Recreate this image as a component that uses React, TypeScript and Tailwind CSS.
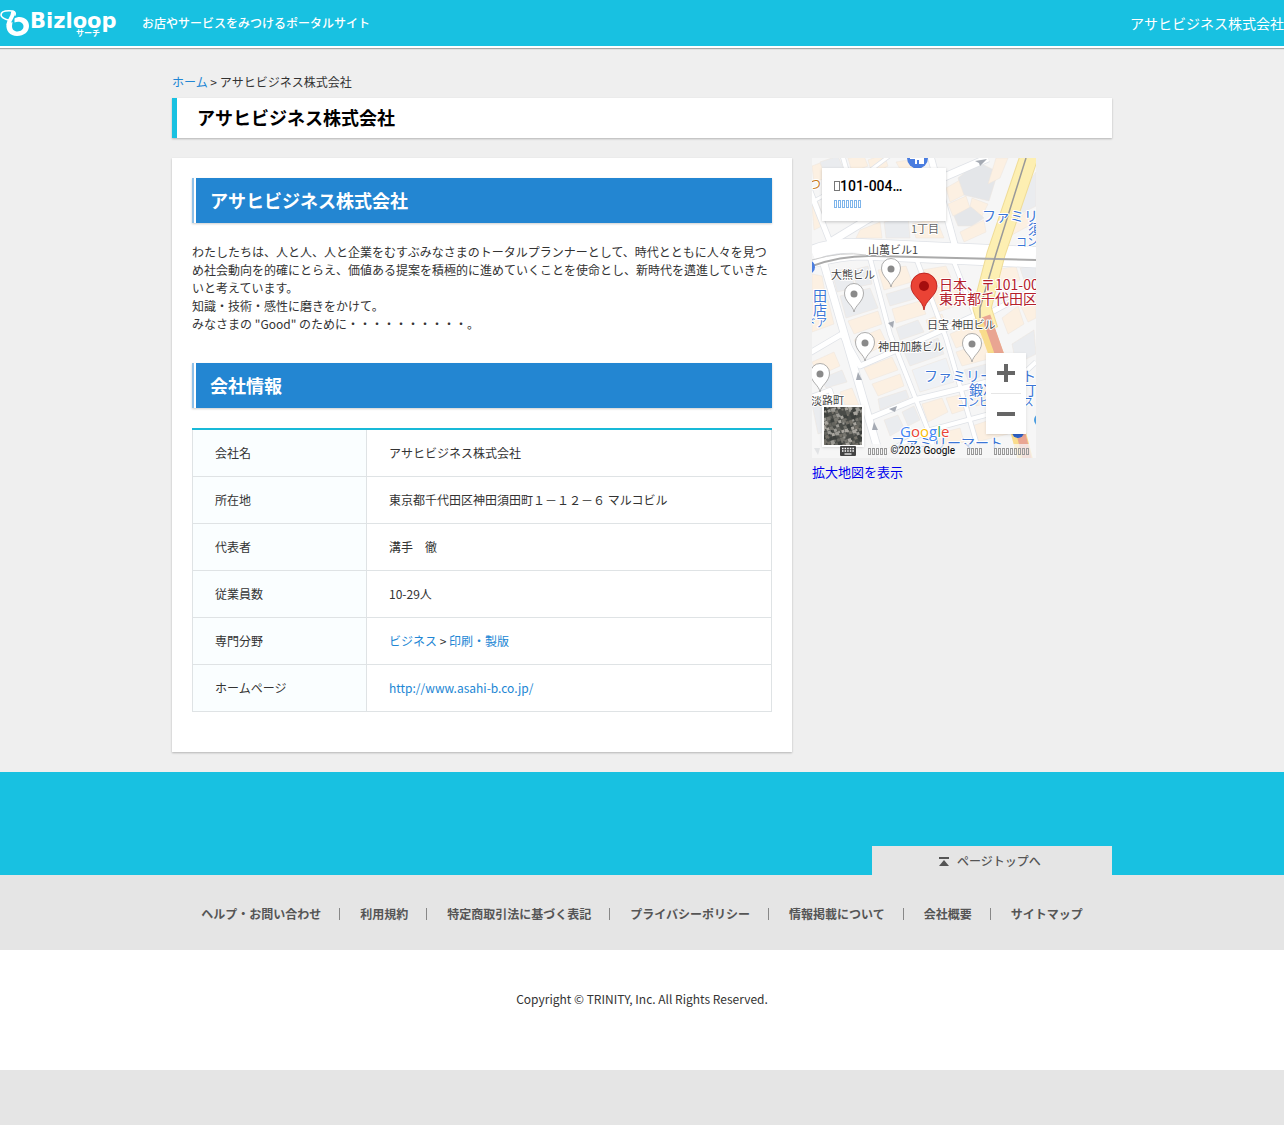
import type { ReactNode } from "react";

const FOOTER_LINKS = [
  "ヘルプ・お問い合わせ",
  "利用規約",
  "特定商取引法に基づく表記",
  "プライバシーポリシー",
  "情報掲載について",
  "会社概要",
  "サイトマップ",
];

const COMPANY: { label: string; value: ReactNode }[] = [
  { label: "会社名", value: "アサヒビジネス株式会社" },
  { label: "所在地", value: "東京都千代田区神田須田町１－１２－６ マルコビル" },
  { label: "代表者", value: "溝手　徹" },
  { label: "従業員数", value: "10-29人" },
  {
    label: "専門分野",
    value: (
      <>
        <TextLink>ビジネス</TextLink> &gt; <TextLink>印刷・製版</TextLink>
      </>
    ),
  },
  { label: "ホームページ", value: <TextLink>http://www.asahi-b.co.jp/</TextLink> },
];

function TextLink({ children }: { children: ReactNode }) {
  return (
    <a href="#" className="text-[#2186d4] hover:underline">
      {children}
    </a>
  );
}

function Logo() {
  return (
    <svg width="120" height="46" viewBox="0 0 120 46" aria-label="Bizloop サーチ">
      <g fill="none" stroke="#fff">
        <path
          d="M10 20.500C4 19 1 17.500 1 15c0-3 4-4.200 8-4.200 4.500 0 7 1.200 6 4.200"
          strokeWidth="1.600"
          strokeLinecap="round"
        />
        <path d="M13 12.500C13 17 9.500 19 8.500 24" strokeWidth="4" strokeLinecap="round" />
      </g>
      <path
        d="M6.500 24c-1 6.500 3.500 12 10.500 12 7 0 12-4.200 12-10 0-5.500-4-9-9.500-9-2 0-3.500.5-5 1.500v4c4.500-2 9 0 9 3.800 0 3.200-2.700 5.200-6 5.200-3.500 0-5.500-2.300-5.500-5.500l.5-4z"
        fill="#fff"
      />
      <text x="30" y="28" fill="#fff" fontFamily="DejaVu Sans" fontWeight="700" fontSize="21">
        Bizloop
      </text>
      <text x="76" y="36" fill="#fff" fontFamily="Noto Sans CJK JP" fontWeight="700" fontSize="8">
        サーチ
      </text>
    </svg>
  );
}

function SectionTitle({ children }: { children: ReactNode }) {
  return (
    <h2 className="border-l-2 border-[#8fc1e9] pl-[2px] text-[18px] font-bold leading-[45px] text-white shadow-[0_1px_2px_rgba(0,0,0,0.2)]">
      <span className="block bg-[#2386d2] pl-[14px]">{children}</span>
    </h2>
  );
}

// Boxes for characters that the map font has no glyph for
function Missing({ count, className }: { count: number; className: string }) {
  return (
    <span className="inline-flex">
      {Array.from({ length: count }, (_, i) => (
        <span key={i} className={`inline-block border ${className}`} />
      ))}
    </span>
  );
}

const ROADS: [string, number][] = [
  ["M20 83L53 63L130 20L176 0", 7],
  ["M-4 28L18 84L6 100", 5],
  ["M30 -4L48 60", 4],
  ["M80 -4L56 14L0 44", 3],
  ["M118 -4L143 88", 6],
  ["M0 95Q20 86 50 88L224 96", 14],
  ["M0 106Q30 98 50 98L224 106", 7],
  ["M12 106L66 292L72 304", 7],
  ["M58 100L78 176L116 272L126 304", 4],
  ["M104 100L134 180L166 290", 4],
  ["M142 104L164 160", 4],
  ["M178 100L176 156L224 130", 5],
  ["M-4 196L30 176L48 208L108 182L164 157", 5],
  ["M-4 240L18 232L40 296", 4],
  ["M58 260L102 242L160 228L190 220", 5],
  ["M70 296L118 272L200 250", 4],
  ["M196 230L224 204", 4],
];

const CREAM = "#fcf0e2";
const GREY = "#eaecef";

const BUILDINGS: [string, string][] = [
  ["0,8 8,5 14,20 2,24", CREAM],
  ["8,4 26,-2 32,12 14,19", GREY],
  ["36,0 52,-2 56,8 40,14", CREAM],
  ["56,2 72,-4 76,8 60,16", CREAM],
  ["84,4 108,0 112,8 92,18", CREAM],
  ["0,48 6,44 14,66 2,72", CREAM],
  ["134,30 148,22 154,36 138,44", CREAM],
  ["136,46 154,38 158,50 141,58", CREAM],
  ["146,20 166,4 186,14 177,43 152,37", "#e4e6e9"],
  ["142,58 160,48 172,60 160,68 146,68", "#e4e6e9"],
  ["148,74 172,62 174,74 152,84", CREAM],
  ["160,40 176,46 170,58 158,48", CREAM],
  ["48,72 68,64 70,80 44,80", CREAM],
  ["72,64 96,58 98,80 74,80", GREY],
  ["100,66 124,60 132,80 104,80", CREAM],
  ["20,114 38,110 43,130 25,134", GREY],
  ["40,112 56,108 60,126 45,129", GREY],
  ["0,116 10,118 14,140 0,142", CREAM],
  ["0,144 16,142 22,166 0,174", CREAM],
  ["28,138 58,130 66,150 34,160", GREY],
  ["36,163 66,153 70,166 42,176", CREAM],
  ["66,112 94,108 100,124 72,132", CREAM],
  ["74,136 102,128 106,140 78,148", GREY],
  ["80,151 108,143 114,156 84,165", CREAM],
  ["110,112 134,108 140,122 116,128", CREAM],
  ["118,132 142,125 150,146 126,154", CREAM],
  ["184,112 204,108 208,122 186,132", CREAM],
  ["208,110 224,108 224,122 212,122", GREY],
  ["42,182 68,171 75,186 50,198", CREAM],
  ["84,170 106,162 112,174 88,182", GREY],
  ["114,162 130,156 134,166 118,174", CREAM],
  ["138,176 166,164 172,180 144,190", CREAM],
  ["144,194 174,184 180,200 150,208", CREAM],
  ["152,212 182,204 186,214 156,222", GREY],
  ["52,210 80,199 86,212 58,222", CREAM],
  ["60,226 88,216 92,228 66,238", CREAM],
  ["66,241 94,232 97,240 68,252", GREY],
  ["92,194 126,180 132,196 98,208", GREY],
  ["100,212 134,200 142,224 108,234", "#eef1f5"],
  ["72,262 86,257 92,270 78,278", GREY],
  ["90,254 102,248 108,262 96,268", GREY],
  ["110,246 130,240 136,254 116,264", CREAM],
  ["134,240 152,236 158,250 140,256", CREAM],
  ["160,232 186,226 190,242 164,248", CREAM],
  ["124,276 148,270 152,284 128,290", CREAM],
  ["160,268 190,258 196,276 164,284", CREAM],
  ["0,204 22,194 28,208 6,218", CREAM],
  ["8,221 30,212 35,224 14,230", GREY],
  ["0,246 16,240 28,268 6,276", GREY],
  ["28,234 40,230 48,250 36,254", CREAM],
  ["176,26 188,20 196,0 184,0", CREAM],
  ["200,66 214,54 220,66 198,78", CREAM],
  ["212,30 224,14 224,48 208,56", GREY],
  ["190,160 206,148 212,166 196,176", CREAM],
  ["208,146 224,138 224,160 216,164", CREAM],
  ["200,186 222,172 224,196 204,206", GREY],
];

const PINS = [
  [79, 111],
  [42, 136],
  [53, 185],
  [160, 186],
  [8, 216],
];

const LABELS: [string, number, number, number, string][] = [
  ["つ", -3, 31, 12, "#c77718"],
  ["1丁目", 99, 75, 11, "#666"],
  ["山萬ビル1", 56, 96, 11, "#444"],
  ["大熊ビル", 19, 121, 11, "#444"],
  ["日宝 神田ビル", 115, 171, 11, "#444"],
  ["神田加藤ビル", 66, 193, 11, "#444"],
  ["淡路町", -1, 247, 11, "#444"],
  ["ファミリ", 170, 63, 14, "#3b76d6"],
  ["須", 216, 76, 14, "#3b76d6"],
  ["コン", 204, 88, 11, "#3b76d6"],
  ["田", 1, 143, 14, "#3b76d6"],
  ["店", 1, 157, 14, "#3b76d6"],
  ["ドア", -7, 169, 11, "#3b76d6"],
  ["ファミリーマート", 112, 223, 14, "#3b76d6"],
  ["鍛冶町一丁", 157, 237, 14, "#3b76d6"],
  ["コンビニエンス", 145, 248, 11, "#3b76d6"],
  ["ファミリーマート", 79, 290, 14, "#3b76d6"],
  ["日本、〒101-00", 127, 132, 14, "#b3202c"],
  ["東京都千代田区", 127, 146, 14, "#b3202c"],
];

function MapDrawing() {
  return (
    <svg viewBox="0 0 224 300" className="block h-full w-full">
      <rect width="224" height="300" fill="#f6f6f6" />
      {BUILDINGS.map(([points, fill]) => (
        <polygon key={points} points={points} fill={fill} stroke="#ece5dd" strokeWidth=".5" />
      ))}
      <g fill="none" strokeLinejoin="round">
        {ROADS.map(([d, w]) => (
          <path key={d} d={d} stroke="#dfe2e7" strokeWidth={w + 1.5} />
        ))}
        {ROADS.map(([d, w]) => (
          <path key={d} d={d} stroke="#fff" strokeWidth={w} />
        ))}
        <path d="M218 -4L184 96L170 150L177 172" stroke="#efdc98" strokeWidth="19" />
        <path d="M218 -4L184 96L170 150L177 172" stroke="#fdefb2" strokeWidth="17" />
        <path d="M171 160L190 212L214 304" stroke="#f9dc8c" strokeWidth="15" />
        <path d="M174 158L193 212L216 304" stroke="#e9a592" strokeWidth="9" />
        <path d="M0 108Q30 97 62 98L224 102" stroke="#aaa" strokeWidth="2" />
        <path d="M0 102Q30 93 54 97" stroke="#ccc" strokeWidth="1" />
        <path d="M214 0L184 96L168 150V160" stroke="#999" strokeWidth="1.500" />
      </g>
      <g fill="#a5aab3">
        <path d="M163 3l12-2-7 7-1-3z" />
        <path d="M76 165l6-2-1 7z" />
        <path d="M46 214l4 8h-6z" />
        <path d="M62 264l4 8h-6z" />
        <path d="M77 251l8-3-2 6z" />
        <path d="M2 290l6 0-2 7z" />
      </g>
      {/* transit markers */}
      <circle cx="105.500" cy="0" r="10.500" fill="#4a7de0" />
      <path d="M98 -2v3h5v5h2V2h2v4h5v-7z" fill="#fff" />
      <circle cx="-4" cy="109" r="7" fill="#4a7de0" />
      <circle cx="206" cy="274" r="6" fill="#2f63c9" />
      <circle cx="228" cy="262" r="6" fill="#4a9de0" />
      <g
        fontFamily="Noto Sans CJK JP"
        stroke="#fff"
        strokeWidth="2"
        strokeLinejoin="round"
        paintOrder="stroke"
      >
        {LABELS.map(([text, x, y, size, fill]) => (
          <text key={`${x}-${y}`} x={x} y={y} fontSize={size} fill={fill}>
            {text}
          </text>
        ))}
      </g>
      {PINS.map(([x, y]) => (
        <g key={`${x}-${y}`} transform={`translate(${x} ${y})`}>
          <path
            d="M0 18C-1 11 -9.500 8 -9.500 -1A9.500 9.500 0 0 1 9.500 -1C9.500 8 1 11 0 18z"
            fill="#fff"
            stroke="#999"
            strokeWidth=".8"
          />
          <circle r="3.500" fill="#8a8a8a" />
        </g>
      ))}
      <path
        d="M112 152C111 142 99 138 99 128a13 13 0 0 1 26 0c0 10-12 14-13 24z"
        fill="#ea4335"
        stroke="#b31412"
        strokeWidth=".8"
      />
      <circle cx="112" cy="128" r="5" fill="#a50e0e" />
      <rect y="286" width="224" height="14" fill="#f5f5f5" fillOpacity=".75" />
      <text
        x="88"
        y="279"
        fontFamily="Open Sans"
        fontSize="15"
        stroke="#fff"
        strokeWidth="2"
        paintOrder="stroke"
      >
        <tspan fill="#4285f4">G</tspan>
        <tspan fill="#ea4335">o</tspan>
        <tspan fill="#fbbc04">o</tspan>
        <tspan fill="#4285f4">g</tspan>
        <tspan fill="#34a853">l</tspan>
        <tspan fill="#ea4335">e</tspan>
      </text>
    </svg>
  );
}

const ROOF_COLORS = ["#4a4c48", "#77766f", "#9b9a94", "#65655f", "#3d403d", "#a9a69f", "#747169"];

function SatelliteThumb() {
  return (
    <svg viewBox="0 0 38 38" className="block h-full w-full">
      <rect width="38" height="38" fill="#4b4d49" />
      <g transform="rotate(-18 19 19)">
        {Array.from({ length: 256 }, (_, i) => (
          <rect
            key={i}
            x={(i % 16) * 3.4 - 8}
            y={Math.floor(i / 16) * 3.4 - 8}
            width={2 + ((i * 13) % 3)}
            height={2 + ((i * 7) % 3)}
            fill={ROOF_COLORS[(i * i * 5 + i * 3 + (i >> 3)) % 7]}
          />
        ))}
      </g>
    </svg>
  );
}

function KeyboardIcon() {
  return (
    <svg width="16" height="10" viewBox="0 0 16 10">
      <rect width="16" height="10" rx="1" fill="#444" />
      <path
        d="M2 2.500h12M2 5h12"
        stroke="#fff"
        strokeWidth="1.500"
        strokeDasharray="1.500 1.100"
      />
      <path d="M4.500 8h7" stroke="#fff" strokeWidth="1.200" />
    </svg>
  );
}

function AccessMap() {
  return (
    <div className="relative h-[300px] w-[224px] overflow-hidden font-[Roboto]">
      <MapDrawing />
      <div className="absolute left-[10px] top-[10px] h-[53px] w-[124px] bg-white px-3 pt-2 shadow-[0_1px_3px_rgba(0,0,0,0.2)]">
        <p className="flex items-center text-[14px] font-medium leading-5 text-black">
          <Missing count={1} className="h-[10px] w-[6px] border-[#777]" />
          101-004…
        </p>
        <a href="#" aria-label="拡大地図を表示" className="flex h-4 items-center">
          <Missing count={7} className="mr-px h-[8px] w-[3px] border-[#7db4ea]" />
        </a>
      </div>
      <button
        aria-label="航空写真"
        className="absolute left-[10px] top-[247px] h-[42px] w-[42px] border-2 border-white shadow"
      >
        <SatelliteThumb />
      </button>
      <div className="absolute left-[174px] top-[195px] flex h-[81px] w-10 flex-col bg-white shadow">
        <button aria-label="拡大" className="flex flex-1 items-center justify-center">
          <svg width="18" height="18" viewBox="0 0 18 18">
            <path d="M9 0v18M0 9h18" stroke="#666" strokeWidth="4" />
          </svg>
        </button>
        <span className="mx-[5px] h-px bg-[#e6e6e6]" />
        <button aria-label="縮小" className="flex flex-1 items-center justify-center">
          <svg width="18" height="18" viewBox="0 0 18 18">
            <path d="M0 9h18" stroke="#666" strokeWidth="4" />
          </svg>
        </button>
      </div>
      <div className="absolute bottom-0 right-0 flex h-[14px] items-center pr-[6px] text-[10px] text-black">
        <button aria-label="キーボード ショートカット" className="mr-3">
          <KeyboardIcon />
        </button>
        <Missing count={5} className="mr-px h-[7px] w-[3px] border-[#999]" />
        <span className="ml-[3px] mr-3">©2023 Google</span>
        <a href="#" aria-label="利用規約" className="mr-[11px] flex">
          <Missing count={4} className="mr-px h-[7px] w-[3px] border-[#999]" />
        </a>
        <a href="#" aria-label="地図の誤りを報告する" className="flex">
          <Missing count={9} className="mr-px h-[7px] w-[3px] border-[#999]" />
        </a>
      </div>
    </div>
  );
}

export default function App() {
  return (
    <div className="min-h-screen bg-[#e5e5e5] font-['Noto_Sans_CJK_JP',sans-serif] text-[12px] leading-[18px] text-[#333]">
      <header className="relative flex h-12 items-center justify-between border-b-2 border-white bg-[#18c1e1] text-white shadow-[0_1px_1px_rgba(0,0,0,0.3)]">
        <div className="flex items-center gap-[22px]">
          <a href="#">
            <Logo />
          </a>
          <p className="font-medium">お店やサービスをみつけるポータルサイト</p>
        </div>
        <p className="pb-px text-[14px]">アサヒビジネス株式会社</p>
      </header>

      <div className="bg-[#efefef] pb-5 pt-[25px]">
        <div className="mx-auto max-w-[940px]">
          <nav>
            <TextLink>ホーム</TextLink> &gt; アサヒビジネス株式会社
          </nav>
          <h1 className="mt-[7px] border-l-[5px] border-[#18c1e1] bg-white pb-px pl-5 text-[18px] font-bold leading-[39px] text-black shadow-[0_1px_2px_rgba(0,0,0,0.25)]">
            アサヒビジネス株式会社
          </h1>

          <div className="mt-5 flex items-start gap-5">
            <main className="min-w-0 flex-1 bg-white px-5 pb-10 pt-5 shadow-[0_1px_2px_rgba(0,0,0,0.25)]">
              <SectionTitle>アサヒビジネス株式会社</SectionTitle>
              <p className="mb-[30px] mt-5">
                わたしたちは、人と人、人と企業をむすぶみなさまのトータルプランナーとして、時代とともに人々を見つめ社会動向を的確にとらえ、価値ある提案を積極的に進めていくことを使命とし、新時代を邁進していきたいと考えています。
                <br />
                知識・技術・感性に磨きをかけて。
                <br />
                みなさまの "Good" のために・・・・・・・・・・。
              </p>
              <SectionTitle>会社情報</SectionTitle>
              <table className="mt-5 w-full border-collapse border-t-2 border-[#18b9d8]">
                <tbody>
                  {COMPANY.map((row) => (
                    <tr key={row.label} className="h-[47px] border-b border-[#dfe3e5]">
                      <th className="w-[174px] border-x border-[#dfe3e5] bg-[#fafeff] px-[22px] text-left font-normal">
                        {row.label}
                      </th>
                      <td className="border-r border-[#dfe3e5] px-[22px]">{row.value}</td>
                    </tr>
                  ))}
                </tbody>
              </table>
            </main>

            <aside className="w-[300px]">
              <AccessMap />
              <a href="#" className="mt-1 block text-[13px] leading-5 text-[#0000ee]">
                拡大地図を表示
              </a>
            </aside>
          </div>
        </div>
      </div>

      <footer>
        <div className="bg-[#18c1e1] pt-[74px]">
          <div className="mx-auto flex max-w-[940px] justify-end">
            <a
              href="#"
              className="flex h-[29px] w-[240px] items-center justify-center gap-2 bg-[#e5e5e5] pr-1 pt-[2px] font-medium text-[#555]"
            >
              <svg width="10" height="9" viewBox="0 0 10 9" fill="#555">
                <path d="M0 0h10v2H0zM5 3l5 6H0z" />
              </svg>
              ページトップへ
            </a>
          </div>
        </div>
        <ul className="flex h-[75px] items-center justify-center pt-1 font-bold text-[#555]">
          {FOOTER_LINKS.map((label, i) => (
            <li key={label} className="flex items-center">
              {i > 0 && <span className="ml-[18px] mr-5 h-3 w-px bg-[#888]" />}
              <a href="#">{label}</a>
            </li>
          ))}
        </ul>
        <p className="bg-white pb-[62px] pt-10 text-center">
          Copyright © TRINITY, Inc. All Rights Reserved.
        </p>
      </footer>
    </div>
  );
}
